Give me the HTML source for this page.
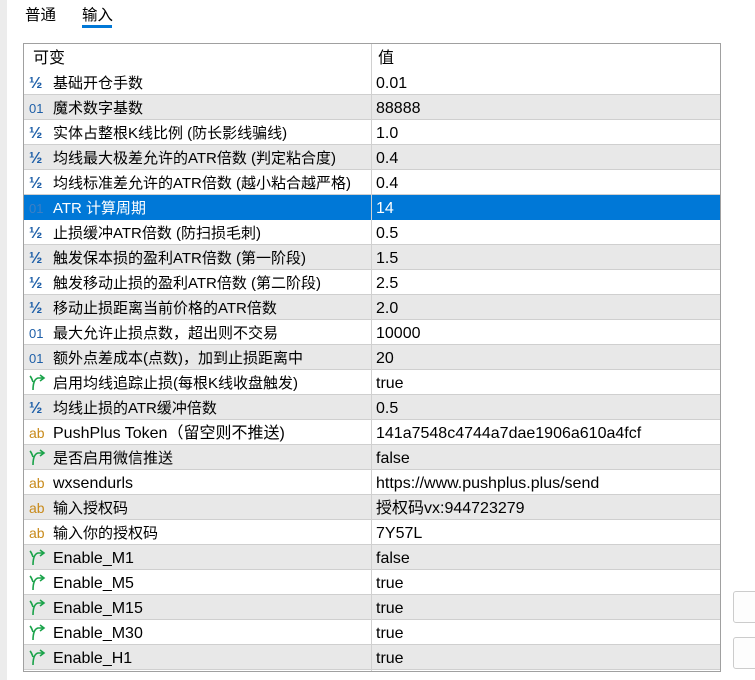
<!DOCTYPE html><html><head><meta charset="utf-8"><style>
*{margin:0;padding:0;box-sizing:border-box}
body{width:755px;height:680px;background:#fff;font-family:"Liberation Sans","Noto Sans CJK SC",sans-serif;font-size:16px;color:#000;position:relative;overflow:hidden}
.strip{position:absolute;left:0;top:0;width:7px;height:680px;background:#ececec}
.tab{position:absolute;top:3px;font-size:15.5px}
.ul{position:absolute;left:82px;top:25px;width:30px;height:3px;background:#0078d7}
.tbl{position:absolute;left:23px;top:43px;width:698px;height:629px;border:1px solid #a0a0a0;overflow:hidden}
.div{position:absolute;left:347px;top:0;width:1px;height:100%;background:#d0d0d0;z-index:2}
.row{position:absolute;left:0;width:696px;height:25px;line-height:28px;border-bottom:1px solid #cfcfcf}
.row.g{background:#e8e8e8}
.row.s{background:#0078d7;color:#fff;border-bottom-color:#0078d7}
.n{position:absolute;left:29px;top:0;white-space:nowrap}
.n.c{font-size:15px}
.v{position:absolute;left:352px;top:0;white-space:nowrap}
.ic{position:absolute;left:5px;top:0;width:18px;font-size:13px;color:#1e5fa8}
.ab{color:#c88a1a;font-size:14px;top:-1px}
.h{position:absolute;left:0;top:0;height:26px;width:696px;line-height:30px}
.btn{position:absolute;left:733px;width:30px;height:32px;border:1px solid #ccc;border-radius:3px;background:#fdfdfd}
</style></head><body>
<div class="strip"></div>
<div class="tab" style="left:25px">普通</div>
<div class="tab" style="left:82px">输入</div>
<div class="ul"></div>
<div class="tbl">
<div class="div"></div>
<div class="h"><span class="n" style="left:9px">可变</span><span class="v" style="left:354px">值</span></div>
<div id="rows"></div>
</div>
<div class="btn" style="top:591px"></div>
<div class="btn" style="top:637px"></div>
<script>
var H='<span class="ic" style="font-size:16px;font-weight:bold">½</span>',
O='<span class="ic">01</span>',
A='<span class="ic ab">ab</span>',
G='<span class="ic"><svg width="18" height="22" viewBox="0 0 18 22"><path d="M4 20 C4 14 5 9 9 8 L15 8 M11 5 L15 8 L11 11 M4 12 C3 9 2 7 1 6" stroke="#1aa34a" stroke-width="1.6" fill="none"/></svg></span>';
var d=[[H,'基础开仓手数','0.01'],[O,'魔术数字基数','88888'],[H,'实体占整根K线比例 (防长影线骗线)','1.0'],[H,'均线最大极差允许的ATR倍数 (判定粘合度)','0.4'],[H,'均线标准差允许的ATR倍数 (越小粘合越严格)','0.4'],[O,'ATR 计算周期','14'],[H,'止损缓冲ATR倍数 (防扫损毛刺)','0.5'],[H,'触发保本损的盈利ATR倍数 (第一阶段)','1.5'],[H,'触发移动止损的盈利ATR倍数 (第二阶段)','2.5'],[H,'移动止损距离当前价格的ATR倍数','2.0'],[O,'最大允许止损点数，超出则不交易','10000'],[O,'额外点差成本(点数)，加到止损距离中','20'],[G,'启用均线追踪止损(每根K线收盘触发)','true'],[H,'均线止损的ATR缓冲倍数','0.5'],[A,'PushPlus Token（留空则不推送)','141a7548c4744a7dae1906a610a4fcf'],[G,'是否启用微信推送','false'],[A,'wxsendurls','https://www.pushplus.plus/send'],[A,'输入授权码','授权码vx:944723279'],[A,'输入你的授权码','7Y57L'],[G,'Enable_M1','false'],[G,'Enable_M5','true'],[G,'Enable_M15','true'],[G,'Enable_M30','true'],[G,'Enable_H1','true']];
var s='';d.forEach(function(r,i){var c=i==5?'s':(i%2?'g':'');var ic=r[0];if(i==5)ic='<span class="ic" style="color:#3d7fc4">01</span>';
var nc=(i<14||i==15||i==17||i==18)?'n c':'n';
s+='<div class="row '+c+'" style="top:'+(26+i*25)+'px">'+ic+'<span class="'+nc+'">'+r[1]+'</span><span class="v">'+r[2]+'</span></div>';});
document.getElementById('rows').innerHTML=s;
</script>
</body></html>
